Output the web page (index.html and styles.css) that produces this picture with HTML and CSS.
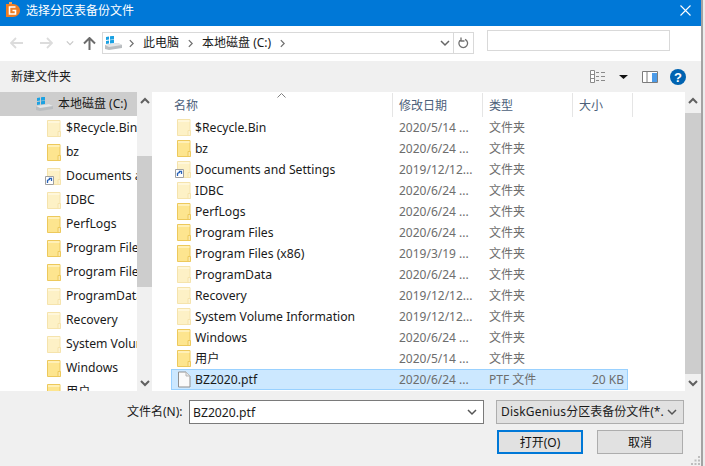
FILE: index.html
```html
<!DOCTYPE html>
<html lang="zh-CN">
<head>
    <meta charset="UTF-8">
    <meta name="viewport" content="width=device-width, initial-scale=1.0">
    <title>选择分区表备份文件</title>
    <link rel="stylesheet" href="styles.css">
</head>
<body>
    <svg class="defs" width="0" height="0">
        <symbol id="folder" viewBox="0 0 14 17">
            <path d="M.5.5h12.5v16H.5z" fill="#fde58f" stroke="#edc95c"/>
            <path d="M1 1h11.500v2H1z" fill="#fff0b8"/>
            <path d="M11 11.500h2.500v5H11z" fill="#fbe9ab" stroke="#edc95c"/>
        </symbol>
        <symbol id="drive" viewBox="0 0 17 14">
            <path d="M0 9l13-2 4 2v3l-13 2-4-1z" fill="#b9bdc0"/>
            <path d="M0 9l13-2 4 2-13 2z" fill="#e4e6e7"/>
            <path d="M1 1l3-.5v3l-3 .5zM5 .3l4-.6v3.500l-4 .5zM1 5l3-.5v3l-3 .5zM5 4.300l4-.6v3.300l-4 .6z" fill="#1ba1e2"/>
        </symbol>
        <symbol id="chev" viewBox="0 0 10 10">
            <path d="M1 3l4 4 4-4" fill="none" stroke="currentColor" stroke-width="1.500"/>
        </symbol>
        <symbol id="sep" viewBox="0 0 6 10">
            <path d="M1 1l4 4-4 4" fill="none" stroke="#6f6f6f" stroke-width="1.500"/>
        </symbol>
        <symbol id="scrollup" viewBox="0 0 10 8">
            <path d="M1 6l4-4 4 4" fill="none" stroke="#606060" stroke-width="2"/>
        </symbol>
        <symbol id="scrolldown" viewBox="0 0 10 8">
            <path d="M1 2l4 4 4-4" fill="none" stroke="#606060" stroke-width="2"/>
        </symbol>
        <symbol id="shortcut" viewBox="0 0 9 9">
            <path d="M.5.5h8v8h-8z" fill="#fff" stroke="#a0a0a0"/>
            <path d="M2.500 7V4.500L5 3.200M3.800 2.300h2.700v2.700" fill="none" stroke="#2a63b8" stroke-width="1.300"/>
        </symbol>
    </svg>

    <div class="window">
        <header class="titlebar">
            <svg class="app-icon" width="14" height="17" viewBox="0 0 14 17">
                <path d="M0 2h7c4 0 7 3 7 6.500S11 15 7 15H0z" fill="#ef7d22"/>
                <path d="M3 0h3v2H3z" fill="#f6a35b"/>
                <path d="M9.500 5H3.500v7h6V8.500H6.500" fill="none" stroke="#fff" stroke-width="1.600"/>
            </svg>
            <span class="title">选择分区表备份文件</span>
            <svg class="close" width="11" height="11" viewBox="0 0 11 11">
                <path d="M.5.5l10 10M10.500.5l-10 10" stroke="#fff" stroke-width="1.100"/>
            </svg>
        </header>

        <nav class="navbar">
            <svg class="nav-back" width="13" height="12" viewBox="0 0 13 12">
                <path d="M6 1L1 6l5 5M1 6h12" fill="none" stroke="#dcdcdc" stroke-width="1.800"/>
            </svg>
            <svg class="nav-forward" width="13" height="12" viewBox="0 0 13 12">
                <path d="M7 1l5 5-5 5M12 6H0" fill="none" stroke="#dcdcdc" stroke-width="1.800"/>
            </svg>
            <svg class="nav-recent" width="8" height="8"><use href="#chev"/></svg>
            <svg class="nav-up" width="13" height="13" viewBox="0 0 13 13">
                <path d="M1 6.500l5.500-5.500 5.500 5.500M6.500 1v12" fill="none" stroke="#6b6b6b" stroke-width="2"/>
            </svg>
            <div class="address">
                <svg class="address-drive" width="17" height="14"><use href="#drive"/></svg>
                <svg class="crumb-sep" width="5" height="9"><use href="#sep"/></svg>
                <span class="crumb">此电脑</span>
                <svg class="crumb-sep" width="5" height="9"><use href="#sep"/></svg>
                <span class="crumb">本地磁盘 (C:)</span>
                <svg class="crumb-sep" width="5" height="9"><use href="#sep"/></svg>
                <svg class="address-chev" width="10" height="10"><use href="#chev"/></svg>
                <div class="refresh">
                    <svg width="11" height="12" viewBox="0 0 11 12">
                        <path d="M7 2.300a4.300 4.300 0 1 1-3.500 0M3 .5v3.500h3.500" fill="none" stroke="#707070" stroke-width="1.300"/>
                    </svg>
                </div>
            </div>
            <div class="search"></div>
        </nav>

        <div class="toolbar">
            <span class="new-folder">新建文件夹</span>
            <svg class="tool-views" width="16" height="13" viewBox="0 0 16 13">
                <path d="M.5.500h4v12h-4zM.5 4.500h4M.5 8.500h4" fill="#fff" stroke="#8a8a8a"/>
                <path d="M6 2.500h3M11 2.500h4M6 6.500h3M11 6.500h4M6 10.500h3M11 10.500h4" stroke="#8a8a8a"/>
            </svg>
            <svg class="tool-drop" width="9" height="4" viewBox="0 0 9 4"><path d="M0 0h9L4.500 4z" fill="#111"/></svg>
            <svg class="tool-pane" width="16" height="12" viewBox="0 0 16 12">
                <path d="M.5.500h15v11H.5z" fill="#fff" stroke="#7b7b7b"/>
                <path d="M5 1v10" stroke="#7b7b7b"/>
                <path d="M10 2h5v9h-5z" fill="#4c9be8"/>
            </svg>
            <svg class="tool-help" width="16" height="16" viewBox="0 0 16 16">
                <circle cx="8" cy="8" r="8" fill="#0063b1"/>
                <text x="8" y="12.500" text-anchor="middle" class="help-mark">?</text>
            </svg>
        </div>

        <div class="panes">
            <aside class="tree">
                <div class="tree-items">
                    <div class="tree-row tree-drive"><svg width="17" height="14"><use href="#drive"/></svg><span>本地磁盘 (C:)</span></div>
                    <div class="tree-row"><svg class="faded" width="14" height="17"><use href="#folder"/></svg><span>$Recycle.Bin</span></div>
                    <div class="tree-row"><svg width="14" height="17"><use href="#folder"/></svg><span>bz</span></div>
                    <div class="tree-row"><span class="icon-wrap"><svg class="faded" width="14" height="17"><use href="#folder"/></svg><svg class="badge" width="9" height="9"><use href="#shortcut"/></svg></span><span>Documents and Settings</span></div>
                    <div class="tree-row"><svg class="faded" width="14" height="17"><use href="#folder"/></svg><span>IDBC</span></div>
                    <div class="tree-row"><svg width="14" height="17"><use href="#folder"/></svg><span>PerfLogs</span></div>
                    <div class="tree-row"><svg width="14" height="17"><use href="#folder"/></svg><span>Program Files</span></div>
                    <div class="tree-row"><svg width="14" height="17"><use href="#folder"/></svg><span>Program Files (x86)</span></div>
                    <div class="tree-row"><svg class="faded" width="14" height="17"><use href="#folder"/></svg><span>ProgramData</span></div>
                    <div class="tree-row"><svg class="faded" width="14" height="17"><use href="#folder"/></svg><span>Recovery</span></div>
                    <div class="tree-row"><svg class="faded" width="14" height="17"><use href="#folder"/></svg><span>System Volume Information</span></div>
                    <div class="tree-row"><svg width="14" height="17"><use href="#folder"/></svg><span>Windows</span></div>
                    <div class="tree-row"><svg width="14" height="17"><use href="#folder"/></svg><span>用户</span></div>
                </div>
                <div class="scrollbar tree-scroll">
                    <svg class="scroll-btn" width="10" height="8"><use href="#scrollup"/></svg>
                    <div class="thumb"></div>
                    <svg class="scroll-btn scroll-end" width="10" height="8"><use href="#scrolldown"/></svg>
                </div>
            </aside>

            <main class="list">
                <div class="list-body">
                    <div class="list-head">
                        <span class="col-name head-name">名称
                            <svg class="sort" width="9" height="5" viewBox="0 0 9 5"><path d="M.5 4.500l4-4 4 4" fill="none" stroke="#808080"/></svg>
                        </span>
                        <span class="col-date">修改日期</span>
                        <span class="col-type">类型</span>
                        <span class="col-size">大小</span>
                    </div>
                    <div class="row"><span class="col-name"><svg class="faded" width="14" height="17"><use href="#folder"/></svg>$Recycle.Bin</span><span class="col-date">2020/5/14 ...</span><span class="col-type">文件夹</span></div>
                    <div class="row"><span class="col-name"><svg width="14" height="17"><use href="#folder"/></svg>bz</span><span class="col-date">2020/6/24 ...</span><span class="col-type">文件夹</span></div>
                    <div class="row"><span class="col-name"><span class="icon-wrap"><svg class="faded" width="14" height="17"><use href="#folder"/></svg><svg class="badge" width="9" height="9"><use href="#shortcut"/></svg></span>Documents and Settings</span><span class="col-date">2019/12/12...</span><span class="col-type">文件夹</span></div>
                    <div class="row"><span class="col-name"><svg class="faded" width="14" height="17"><use href="#folder"/></svg>IDBC</span><span class="col-date">2020/6/24 ...</span><span class="col-type">文件夹</span></div>
                    <div class="row"><span class="col-name"><svg width="14" height="17"><use href="#folder"/></svg>PerfLogs</span><span class="col-date">2020/6/24 ...</span><span class="col-type">文件夹</span></div>
                    <div class="row"><span class="col-name"><svg width="14" height="17"><use href="#folder"/></svg>Program Files</span><span class="col-date">2020/6/24 ...</span><span class="col-type">文件夹</span></div>
                    <div class="row"><span class="col-name"><svg width="14" height="17"><use href="#folder"/></svg>Program Files (x86)</span><span class="col-date">2019/3/19 ...</span><span class="col-type">文件夹</span></div>
                    <div class="row"><span class="col-name"><svg class="faded" width="14" height="17"><use href="#folder"/></svg>ProgramData</span><span class="col-date">2020/6/24 ...</span><span class="col-type">文件夹</span></div>
                    <div class="row"><span class="col-name"><svg class="faded" width="14" height="17"><use href="#folder"/></svg>Recovery</span><span class="col-date">2019/12/12...</span><span class="col-type">文件夹</span></div>
                    <div class="row"><span class="col-name"><svg class="faded" width="14" height="17"><use href="#folder"/></svg>System Volume Information</span><span class="col-date">2019/12/12...</span><span class="col-type">文件夹</span></div>
                    <div class="row"><span class="col-name"><svg width="14" height="17"><use href="#folder"/></svg>Windows</span><span class="col-date">2020/6/24 ...</span><span class="col-type">文件夹</span></div>
                    <div class="row"><span class="col-name"><svg width="14" height="17"><use href="#folder"/></svg>用户</span><span class="col-date">2020/5/14 ...</span><span class="col-type">文件夹</span></div>
                    <div class="row selected">
                        <span class="col-name">
                            <svg width="14" height="17" viewBox="0 0 14 17"><path d="M1.500 1h7.500l4 4v11H1.500z" fill="#fafafa" stroke="#8f8f8f"/><path d="M9 1v4h4" fill="#e8e8e8" stroke="#b5b5b5"/></svg>BZ2020.ptf
                        </span>
                        <span class="col-date">2020/6/24 ...</span>
                        <span class="col-type">PTF 文件</span>
                        <span class="col-size">20 KB</span>
                    </div>
                </div>
                <div class="scrollbar list-scroll">
                    <svg class="scroll-btn" width="10" height="8"><use href="#scrollup"/></svg>
                    <div class="thumb"></div>
                    <svg class="scroll-btn scroll-end" width="10" height="8"><use href="#scrolldown"/></svg>
                </div>
            </main>
        </div>

        <footer class="bottom">
            <div class="file-row">
                <label class="file-label" for="fileName">文件名(N):</label>
                <div class="file-box">
                    <input id="fileName" class="file-input" type="text" value="BZ2020.ptf">
                    <svg class="box-chev" width="10" height="10"><use href="#chev"/></svg>
                </div>
                <div class="file-type">
                    <span class="file-type-text"><span class="latin">DiskGenius</span>分区表备份文件(*.ptf)</span>
                    <svg class="box-chev" width="10" height="10"><use href="#chev"/></svg>
                </div>
            </div>
            <div class="buttons">
                <button type="button" class="open">打开(O)</button>
                <button type="button">取消</button>
            </div>
            <svg class="grip" width="10" height="10" viewBox="0 0 10 10">
                <path d="M7 0h2v2H7zM3.500 3.500h2v2h-2zM7 3.500h2v2H7zM0 7h2v2H0zM3.500 7h2v2h-2zM7 7h2v2H7z" fill="#bdbdbd"/>
            </svg>
        </footer>
    </div>
    <div class="screen-edge"></div>
</body>
</html>
```

FILE: styles.css
```css
* {
    box-sizing: border-box;
}

body {
    display: flex;
    width: 705px;
    height: 466px;
    margin: 0;
    overflow: hidden;
    background-color: #f0f0f0;
    color: #000;
    font-family: "Noto Sans", "Noto Sans CJK SC", sans-serif;
    font-size: 12px;
    line-height: 16px;
}

svg {
    display: block;
    flex: none;
}

.defs {
    position: absolute;
}

.window {
    display: flex;
    flex-direction: column;
    width: 701px;
    height: 466px;
    flex: none;
}

.screen-edge {
    width: 4px;
    border-left: 2px solid #a3a3a3;
    background-color: #ececec;
}

/* title bar */
.titlebar {
    display: flex;
    align-items: center;
    height: 26px;
    padding-left: 6px;
    padding-bottom: 4px;
    background-color: #0078d7;
    color: #fff;
}

.app-icon,
.close {
    margin-bottom: 2px;
}

.title {
    margin-left: 6px;
    font-size: 12px;
}

.close {
    margin-left: auto;
    margin-right: 10px;
}

/* back, forward, address */
.navbar {
    display: flex;
    align-items: flex-start;
    height: 35px;
    padding-left: 10px;
    background-color: #fff;
}

.nav-back,
.nav-forward,
.nav-recent,
.nav-up {
    margin-top: 11px;
}

.nav-forward {
    margin-left: 17px;
}

.nav-recent {
    margin-left: 13px;
    margin-top: 13px;
    color: #c8c8c8;
}

.nav-up {
    margin-left: 9px;
}

.address {
    display: flex;
    align-items: center;
    width: 372px;
    height: 22px;
    margin-top: 6px;
    margin-left: 6px;
    padding-left: 2px;
    border: 1px solid #d9d9d9;
    color: #1a1a1a;
}

.address-drive {
    margin-right: 7px;
}

.crumb {
    margin: 0 9px;
    white-space: nowrap;
}

.address-chev {
    margin-left: auto;
    margin-right: 3px;
    color: #666;
}

.refresh {
    display: flex;
    align-items: center;
    justify-content: center;
    width: 20px;
    height: 20px;
    border-left: 1px solid #d9d9d9;
}

.search {
    width: 183px;
    height: 21px;
    margin-top: 4px;
    margin-left: 13px;
    border: 1px solid #d9d9d9;
}

/* toolbar */
.toolbar {
    display: flex;
    align-items: center;
    height: 31px;
    padding-left: 11px;
}

.new-folder {
    color: #1a1a1a;
}

.tool-views {
    margin-left: auto;
}

.tool-drop {
    margin-left: 13px;
}

.tool-pane {
    margin-left: 14px;
}

.tool-help {
    margin-left: 12px;
    margin-right: 15px;
}

.help-mark {
    fill: #fff;
    font-family: "Liberation Sans", sans-serif;
    font-size: 13px;
    font-weight: bold;
}

/* left tree and file list */
.panes {
    display: flex;
    height: 299px;
    background-color: #fff;
}

.faded {
    opacity: 0.5;
}

.icon-wrap {
    position: relative;
    display: block;
    flex: none;
}

.badge {
    position: absolute;
    left: -2px;
    bottom: 0;
}

.tree {
    display: flex;
    width: 155px;
    flex: none;
}

.tree-items {
    width: 137px;
    overflow: hidden;
}

.tree-row {
    display: flex;
    align-items: center;
    gap: 5px;
    height: 24px;
    padding-left: 47px;
    font-size: 12.2px;
    color: #1a1a1a;
    white-space: nowrap;
}

.tree-drive {
    gap: 5px;
    padding-left: 36px;
    background-color: #cdcdcd;
    font-size: 12px;
}

.scrollbar {
    display: flex;
    flex-direction: column;
    align-items: center;
    width: 16px;
    flex: none;
    background-color: #f0f0f0;
}

.tree-scroll {
    width: 15px;
    margin-right: 3px;
}

.scroll-btn {
    margin-top: 5px;
}

.scroll-end {
    margin-top: auto;
    margin-bottom: 4px;
}

.thumb {
    align-self: stretch;
    background-color: #cdcdcd;
}

.tree-scroll .thumb {
    height: 131px;
    margin-top: 51px;
}

.list-scroll .thumb {
    height: 261px;
    margin-top: 8px;
}

.list {
    display: flex;
    flex: 1;
    min-width: 0;
}

.list-body {
    flex: 1;
    min-width: 0;
}

.list-head {
    display: flex;
    align-items: center;
    height: 25px;
    color: #4c607a;
}

.list-head span {
    display: flex;
    align-items: center;
    height: 24px;
    padding-top: 2px;
    border-right: 1px solid #e5e5e5;
    white-space: nowrap;
}

.list-head .col-name {
    width: 222px;
    margin-left: 16px;
}

.list-head .col-date,
.list-head .col-type {
    padding-left: 6px;
}

.list-head .col-size {
    width: 60px;
    padding-right: 0;
    padding-left: 6px;
}

.head-name {
    position: relative;
    padding-left: 3px;
}

.sort {
    position: absolute;
    left: 106px;
    top: 0;
}

.row {
    display: flex;
    align-items: center;
    height: 21px;
    border: 1px solid transparent;
    margin-left: 16px;
    width: 457px;
    color: #6d6d6d;
    white-space: nowrap;
}

.row .col-name {
    display: flex;
    align-items: center;
    gap: 4px;
    width: 220px;
    padding-left: 5px;
    color: #1a1a1a;
    font-size: 12.2px;
}

.col-date {
    width: 90px;
    padding-left: 7px;
}

.col-type {
    width: 90px;
    padding-left: 7px;
}

.col-size {
    width: 55px;
    padding-right: 3px;
    text-align: right;
}

.selected {
    border-color: #99d1ff;
    background-color: #cce8ff;
}

/* file name and buttons */
.bottom {
    position: relative;
    height: 75px;
    padding-top: 9px;
}

.file-row {
    display: flex;
    align-items: center;
    height: 24px;
}

.file-label {
    margin-left: 127px;
    width: 62px;
    color: #1a1a1a;
}

.file-box {
    display: flex;
    align-items: center;
    width: 295px;
    height: 24px;
    padding-right: 6px;
    border: 1px solid #7a7a7a;
    background-color: #fff;
}

.file-input {
    flex: 1;
    min-width: 0;
    padding: 0 3px;
    border: none;
    outline: none;
    background: none;
    color: #1a1a1a;
    font-family: inherit;
    font-size: 12.2px;
}

.box-chev {
    color: #555;
}

.file-type {
    display: flex;
    align-items: center;
    width: 188px;
    height: 24px;
    margin-left: 12px;
    padding: 0 6px 0 4px;
    border: 1px solid #adadad;
    background-color: #e1e1e1;
}

.file-type-text {
    flex: 1;
    min-width: 0;
    overflow: hidden;
    color: #1a1a1a;
    white-space: nowrap;
    font-size: 12px;
}

.latin {
    letter-spacing: 0.2px;
}

.file-type .box-chev {
    margin-left: 3px;
}

.buttons {
    display: flex;
    justify-content: flex-end;
    gap: 14px;
    margin-top: 6px;
    padding-right: 18px;
}

button {
    width: 86px;
    height: 24px;
    padding: 0;
    border: 1px solid #adadad;
    background-color: #e1e1e1;
    color: #111;
    font-family: inherit;
    font-size: 12px;
}

button.open {
    border: 2px solid #0078d7;
}

.grip {
    position: absolute;
    right: 0;
    bottom: 0;
}
```
